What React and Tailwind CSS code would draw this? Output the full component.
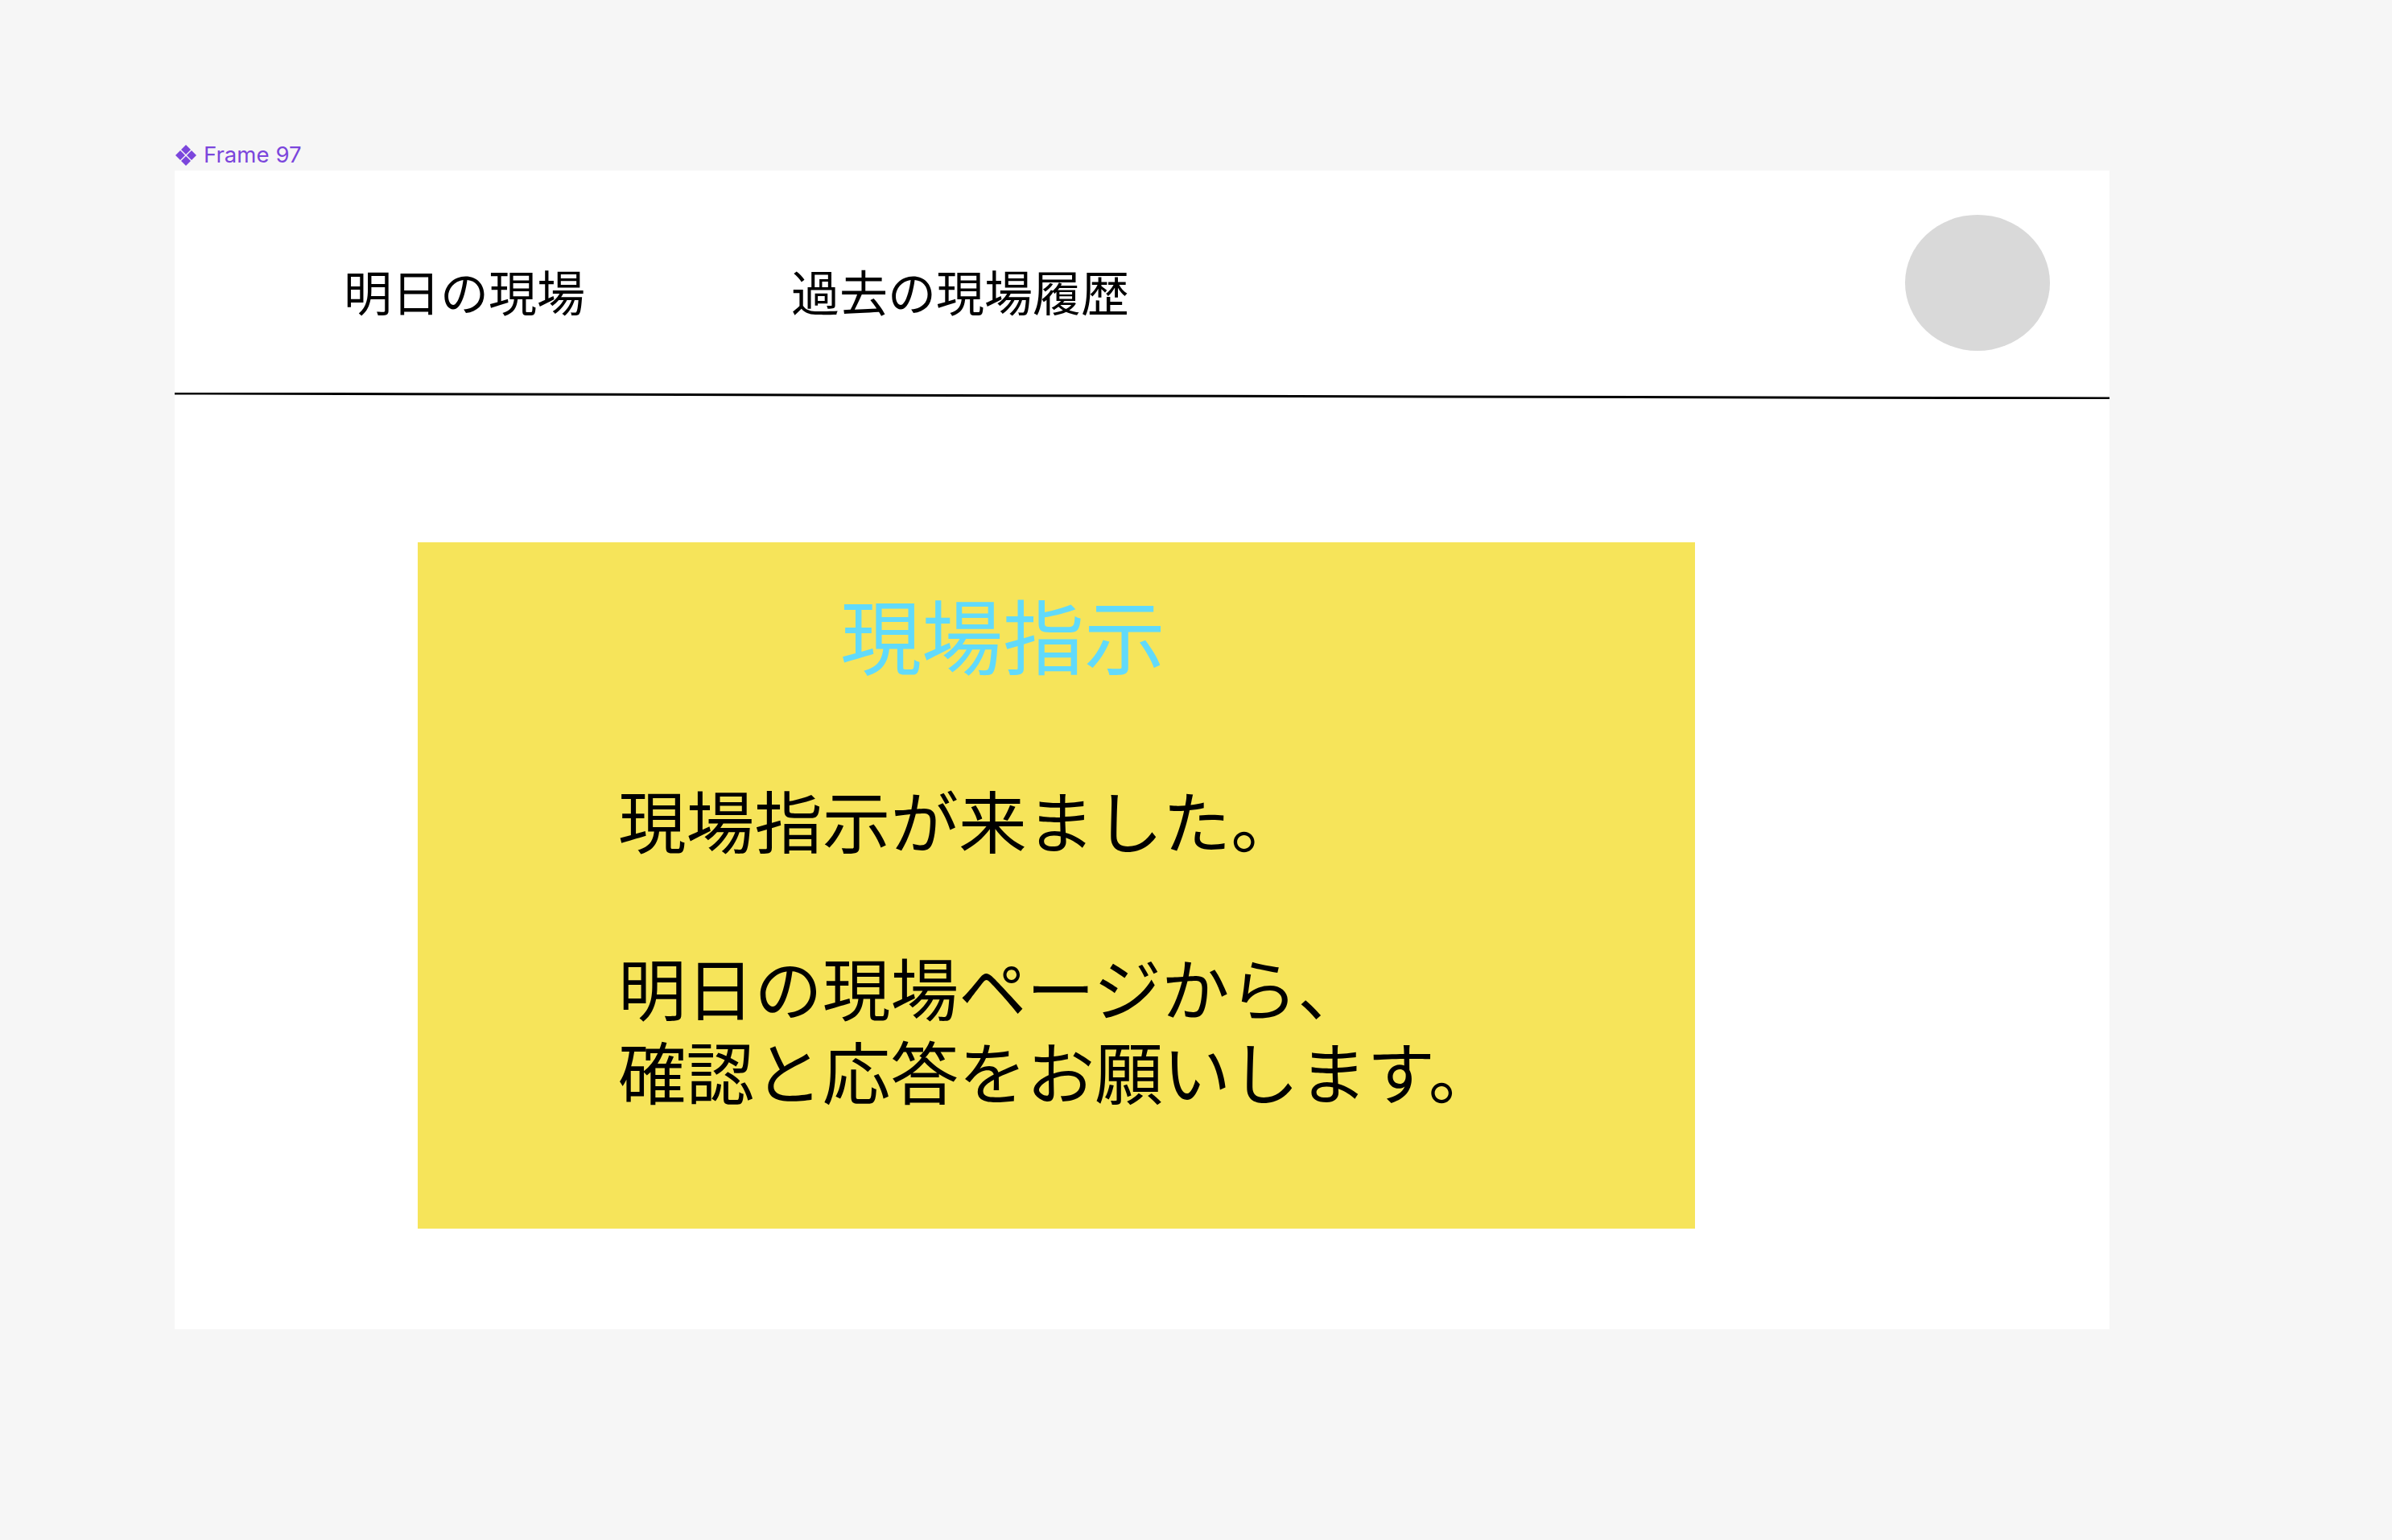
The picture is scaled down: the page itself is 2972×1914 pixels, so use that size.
function FrameIcon() {
  return (
    <svg width="28" height="28" viewBox="0 0 28 28" fill="#7b46dc" className="shrink-0">
      <path d="M14 1l6 6-6 6-6-6z" />
      <path d="M7 8l6 6-6 6-6-6z" />
      <path d="M21 8l6 6-6 6-6-6z" />
      <path d="M14 15l6 6-6 6-6-6z" />
    </svg>
  )
}

export default function App() {
  return (
    <div className="min-h-screen bg-[#f6f6f6] pl-[217px] pt-[174px] font-['Noto_Sans_CJK_JP',sans-serif]">
      <div className="flex h-[38px] items-center gap-[8px] font-['Inter',sans-serif] text-[27.6px] text-[#7b46dc]">
        <FrameIcon />
        <span>Frame 97</span>
      </div>

      <div className="flex h-[1440px] w-[2404px] flex-col bg-white">
        <header className="flex h-[276px] items-start pl-[210px] pr-[74px] text-[60px] leading-none text-black">
          <nav className="flex gap-[256px] pt-[119px]">
            <a>明日の現場</a>
            <a>過去の現場履歴</a>
          </nav>
          <div className="ml-auto mt-[55px] h-[169px] w-[180px] rounded-[50%] bg-[#d9d9d9]" />
        </header>

        <svg className="block h-[8px] w-full shrink-0" viewBox="0 0 2404 8" preserveAspectRatio="none">
          <line x1="0" y1="1" x2="2404" y2="7" stroke="#000" strokeWidth="3" />
        </svg>

        <div className="pl-[302px] pt-[178px]">
          <section className="h-[853px] w-[1587px] bg-[#f6e45a]">
            <h1 className="pl-[525px] pt-[43px] text-[101px] font-normal leading-[140px] text-[#61dafb]">
              現場指示
            </h1>
            <div className="pl-[249px] pt-[108px] text-[84.6px] leading-[104px] text-black">
              <p>現場指示が来ました。</p>
              <p className="mt-[104px]">明日の現場ページから、</p>
              <p>確認と応答をお願いします。</p>
            </div>
          </section>
        </div>
      </div>
    </div>
  )
}
